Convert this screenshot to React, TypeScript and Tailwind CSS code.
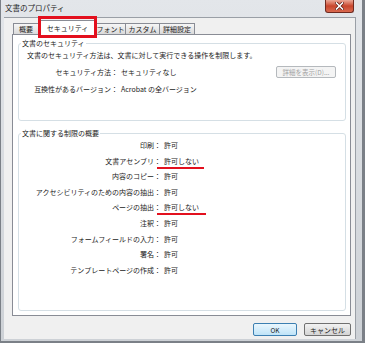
import React from "react";

const FONT = "font-['Noto_Sans_CJK_JP','Noto_Sans',sans-serif]";

interface Perm {
  label: string;
  value: string;
  mark?: number; // width of red underline
}

const PERMS: Perm[] = [
  { label: "印刷", value: "許可" },
  { label: "文書アセンブリ", value: "許可しない", mark: 47 },
  { label: "内容のコピー", value: "許可" },
  { label: "アクセシビリティのための内容の抽出", value: "許可" },
  { label: "ページの抽出", value: "許可しない", mark: 49 },
  { label: "注釈", value: "許可" },
  { label: "フォームフィールドの入力", value: "許可" },
  { label: "署名", value: "許可" },
  { label: "テンプレートページの作成", value: "許可" },
];

const TABS = [
  { label: "概要", w: "w-[26px]" },
  { label: "セキュリティ", w: "w-[57px]", active: true },
  { label: "フォント", w: "w-[31px]" },
  { label: "カスタム", w: "w-[35px]" },
  { label: "詳細設定", w: "w-[36px]" },
];

function CloseButton() {
  return (
    <div className="mr-[2px] w-[29px] h-[13px] rounded-b-[3px] border border-t-0 border-[#6e2a20] bg-linear-to-b from-[#eaa797] via-[#c8452c] to-[#da6a50] flex items-center justify-center">
      <svg width="9" height="8" viewBox="0 0 9 8">
        <path d="M1.5 1 L7.5 7 M7.5 1 L1.5 7" stroke="#5a1a12" strokeWidth="3" strokeLinecap="square" />
        <path d="M1.5 1 L7.5 7 M7.5 1 L1.5 7" stroke="#ffffff" strokeWidth="1.6" strokeLinecap="square" />
      </svg>
    </div>
  );
}

export default function App() {
  return (
    <div className={`${FONT} w-[365px] h-[343px] flex flex-col bg-linear-to-b from-[#e3e6ea] to-[#cdd1d6] border-l border-r-[3px] border-b-[2px] border-[#7b8087] pl-[3px] pr-[6px] pb-[2px] text-[#1b1b1b]`}>
      {/* title bar */}
      <div className="h-[17px] flex items-start justify-between">
        <span className="text-[7.5px] leading-[10px] mt-[3px] ml-[1px] text-[#222]">文書のプロパティ</span>
        <CloseButton />
      </div>

      {/* client area */}
      <div className="flex-1 bg-[#f0f0f0] border-t border-r border-[#9a9fa6] flex flex-col pl-[8px] pr-[4px]">
        {/* tabs */}
        <div className="h-[16px] flex items-end pl-[1px] relative z-10">
          {TABS.map((t) =>
            t.active ? (
              <div
                key={t.label}
                className={`${t.w} h-[15px] -mb-[1px] relative bg-white border border-b-0 border-[#898c95] flex items-center justify-center text-[7px] leading-[10px]`}
              >
                {t.label}
                <div className="absolute -left-[2px] -right-[2px] -top-[5px] -bottom-[3px] border-[3px] border-[#e3101e]" />
              </div>
            ) : (
              <div
                key={t.label}
                className={`${t.w} h-[11px] -ml-px first:ml-0 bg-linear-to-b from-[#f6f6f6] to-[#dadada] border border-b-0 border-[#898c95] flex items-center justify-center text-[7px] leading-[10px]`}
              >
                {t.label}
              </div>
            )
          )}
        </div>

        {/* tab page */}
        <div className="h-[282px] bg-white border border-[#898c95] pl-[5px] pr-[4px]">
          <fieldset className="mt-[3px] h-[83px] border border-[#d5dfe5] rounded-[3px]">
            <legend className="ml-[2px] px-[1px] text-[7px] leading-[10px]">文書のセキュリティ</legend>
            <div className="mt-[1px] h-[12px] pl-[8px] flex items-center text-[7px] leading-[10px]">
              文書のセキュリティ方法は、文書に対して実行できる操作を制限します。
            </div>
            <div className="mt-[2px] h-[17px] pr-[9px] flex items-center text-[7px] leading-[10px]">
              <span className="w-[99px] shrink-0 text-right">セキュリティ方法：</span>
              <span className="ml-[3px]">セキュリティなし</span>
              <div className="flex-1" />
              <div className="w-[60px] h-[12px] border border-[#b5b9bd] rounded-[2px] bg-[#f4f4f4] text-[#a3a3a3] text-[6.5px] flex items-center justify-center">
                詳細を表示(D)...
              </div>
            </div>
            <div className="h-[17px] flex items-center text-[7px] leading-[10px]">
              <span className="w-[99px] shrink-0 text-right">互換性があるバージョン：</span>
              <span className="ml-[3px]">Acrobat の全バージョン</span>
            </div>
          </fieldset>

          <fieldset className="mt-[7px] h-[183px] border border-[#d5dfe5] rounded-[3px]">
            <legend className="ml-[2px] px-[1px] text-[7px] leading-[10px]">文書に関する制限の概要</legend>
            <div className="flex flex-col">
              {PERMS.map((p) => (
                <div key={p.label} className="h-[15.6px] flex items-center text-[7px] leading-[15.6px]">
                  <span className="w-[142px] shrink-0 text-right whitespace-nowrap">{p.label}：</span>
                  <span className="ml-[3px] relative">
                    {p.value}
                    {p.mark && (
                      <span
                        className="absolute -left-[7px] top-[13px] h-[2px] bg-[#e3101e]"
                        style={{ width: p.mark }}
                      />
                    )}
                  </span>
                </div>
              ))}
            </div>
          </fieldset>
        </div>

        {/* buttons */}
        <div className="mt-[7px] flex justify-end gap-[7px]">
          <div className="w-[44px] h-[13px] rounded-[2px] border border-[#3c7fb1] bg-linear-to-b from-[#eaf6fd] to-[#bfe4f8] text-[6.5px] leading-[10px] flex items-center justify-center">
            OK
          </div>
          <div className="w-[47px] h-[13px] rounded-[2px] border border-[#707070] bg-linear-to-b from-[#f2f2f2] to-[#d4d4d4] text-[7px] leading-[10px] flex items-center justify-center">
            キャンセル
          </div>
        </div>
      </div>
    </div>
  );
}
